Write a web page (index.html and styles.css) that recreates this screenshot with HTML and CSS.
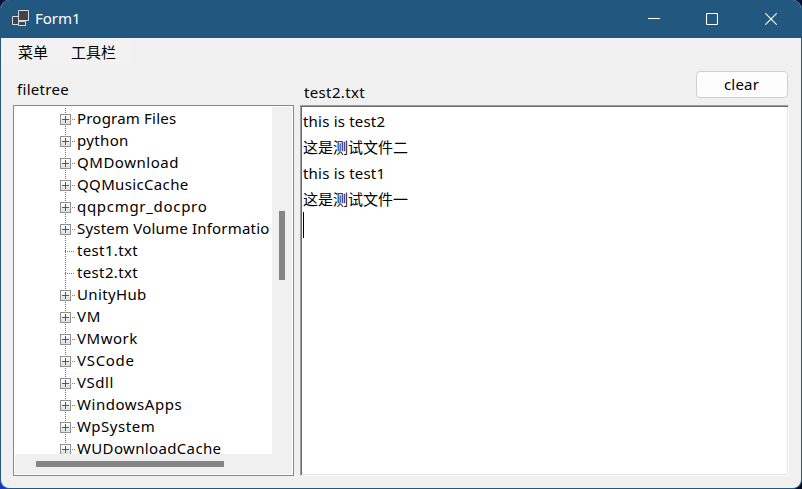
FILE: index.html
```html
<!DOCTYPE html>
<html lang="zh">
<head>
<meta charset="utf-8">
<title>Form1</title>
<link rel="stylesheet" href="styles.css">
</head>
<body>
<div class="window">
  <header class="titlebar">
    <svg class="app-icon" width="18" height="18" viewBox="0 0 18 18"><g fill="#444246" stroke="#d2dae2" stroke-width="1"><path d="M1.5 6.5h6v8h-6z"/><path d="M7.5 11.5h7v4h-7z"/><path d="M7.5 .5h10v10h-10z"/></g></svg>
    <span class="title">Form1</span>
    <div class="controls">
      <svg width="12" height="12" viewBox="0 0 12 12"><path d="M0 5.5h12"/></svg>
      <svg width="12" height="12" viewBox="0 0 12 12"><rect x=".5" y=".5" width="11" height="11" rx="1"/></svg>
      <svg width="12" height="12" viewBox="0 0 12 12"><path d="M.3.3l11.4 11.4M11.7.3L.3 11.7"/></svg>
    </div>
  </header>
  <nav class="menu"><span>菜单</span><span>工具栏</span></nav>
  <main class="panes">
    <section class="left">
      <div class="label">filetree</div>
      <div class="tree">
        <ul class="nodes">
          <li class="tight"><i class="box"></i>Program Files</li>
          <li><i class="box"></i>python</li>
          <li class="wide"><i class="box"></i>QMDownload</li>
          <li><i class="box"></i>QQMusicCache</li>
          <li class="wider"><i class="box"></i>qqpcmgr_docpro</li>
          <li class="tight"><i class="box"></i>System Volume Informatio</li>
          <li><i class="leaf"></i>test1.txt</li>
          <li><i class="leaf"></i>test2.txt</li>
          <li><i class="box"></i>UnityHub</li>
          <li class="wider"><i class="box"></i>VM</li>
          <li class="wide"><i class="box"></i>VMwork</li>
          <li class="wider"><i class="box"></i>VSCode</li>
          <li class="wide"><i class="box"></i>VSdll</li>
          <li class="wide"><i class="box"></i>WindowsApps</li>
          <li class="wide"><i class="box"></i>WpSystem</li>
          <li><i class="box"></i>WUDownloadCache</li>
        </ul>
        <div class="vscroll"><div class="vthumb"></div></div>
        <div class="hscroll"><div class="hthumb"></div></div>
      </div>
    </section>
    <section class="right">
      <div class="toolbar"><span class="filename">test2.txt</span><button class="clear">clear</button></div>
      <div class="editor">
        <p>this is test2</p>
        <p class="han">这是测试文件二</p>
        <p>this is test1</p>
        <p class="han">这是测试文件一</p>
        <div class="caret"></div>
      </div>
    </section>
  </main>
</div>
</body>
</html>
```
FILE: styles.css
```css
* { box-sizing: border-box; }
body {
  margin: 0;
  width: 802px;
  height: 489px;
  overflow: hidden;
  background: linear-gradient(90deg, #1a33cc 50%, #020a20 50%) 0 100% / 100% 50% no-repeat, #07123a;
  font: 15px/22px "Noto Sans", "Noto Sans CJK SC", sans-serif;
  color: #000;
}
.window {
  height: 489px;
  border: 1px solid #22577f;
  border-top: 0;
  border-radius: 9px;
  background: #f0f0f0;
  overflow: hidden;
}
.titlebar {
  display: flex;
  align-items: center;
  height: 38px;
  padding: 0 24px 0 10px;
  background: #22577f;
  color: #fff;
}
.title { margin-left: 6px; padding-bottom: 2px; }
.controls { display: flex; gap: 47px; margin-left: auto; }
.controls svg:first-child { margin-right: -1px; }
.controls svg { fill: none; stroke: #fff; stroke-width: 1.1; }
.menu {
  display: flex;
  gap: 23px;
  width: 129px;
  height: 28px;
  padding: 3px 0 0 17px;
  background: #f2f2f2;
  white-space: nowrap;
}
.panes { display: flex; gap: 6px; padding: 0 12px; }
.left { width: 281px; }
.label { height: 39px; padding: 12px 0 0 4px; letter-spacing: .3px; }
.tree {
  display: grid;
  grid-template: 347px 20px / 257px 20px;
  height: 371px;
  padding: 1px;
  border: 1px solid #828790;
  background: #fff;
}
.nodes {
  margin: 0;
  padding: 1px 0 0 45px;
  list-style: none;
  overflow: hidden;
  white-space: nowrap;
}
.nodes li {
  display: flex;
  height: 22px;
  line-height: 20px;
  letter-spacing: .35px;
  background: repeating-linear-gradient(#707070 0 1px, #fff 1px 2px) 5px 0 / 1px 100% no-repeat;
}
.nodes .tight { letter-spacing: .2px; }
.nodes .wide { letter-spacing: .53px; }
.nodes .wider { letter-spacing: .7px; }
.box, .leaf { flex: none; width: 17px; height: 22px; }
.box {
  background:
    linear-gradient(#3d5a9a, #3d5a9a) 5px 8px / 1px 7px no-repeat,
    linear-gradient(#3d5a9a, #3d5a9a) 2px 11px / 7px 1px no-repeat,
    linear-gradient(#fff, #dedede) 1px 7px / 9px 9px no-repeat,
    linear-gradient(#919191, #919191) 0 6px / 11px 11px no-repeat,
    repeating-linear-gradient(90deg, #808080 0 1px, #fff 1px 2px) 12px 11px / 3px 1px no-repeat;
}
.leaf { background: repeating-linear-gradient(90deg, #808080 0 1px, #fff 1px 2px) 5px 11px / 9px 1px no-repeat; }
.vscroll { padding: 104px 0 0 7px; background: #f0f0f0; }
.vthumb { width: 6px; height: 69px; background: #868686; }
.hscroll { grid-column: 1 / 3; padding: 7px 0 0 21px; background: #f0f0f0; }
.hthumb { width: 188px; height: 6px; background: #868686; }
.right { width: 489px; }
.toolbar { display: flex; justify-content: space-between; height: 39px; }
.filename { padding: 15px 0 0 4px; letter-spacing: .35px; }
.clear {
  width: 92px;
  height: 27px;
  margin: 5px 1px 0 0;
  padding: 0 1px 2px 0;
  border: 1px solid #d0d0d0;
  border-radius: 4px;
  background: #fdfdfd;
  color: #000;
  font: inherit;
  letter-spacing: .2px;
}
.editor {
  height: 371px;
  padding: 2px;
  border: 1px solid;
  border-color: #a0a0a0 #fff #fff #a0a0a0;
  box-shadow: inset 1px 1px #696969, inset -1px -1px #e3e3e3;
  background: #fff;
}
.editor p { margin: 0; height: 26px; line-height: 26px; letter-spacing: .2px; }
.editor .han { letter-spacing: 0; }
.caret { width: 1px; height: 26px; background: #000; }
```
